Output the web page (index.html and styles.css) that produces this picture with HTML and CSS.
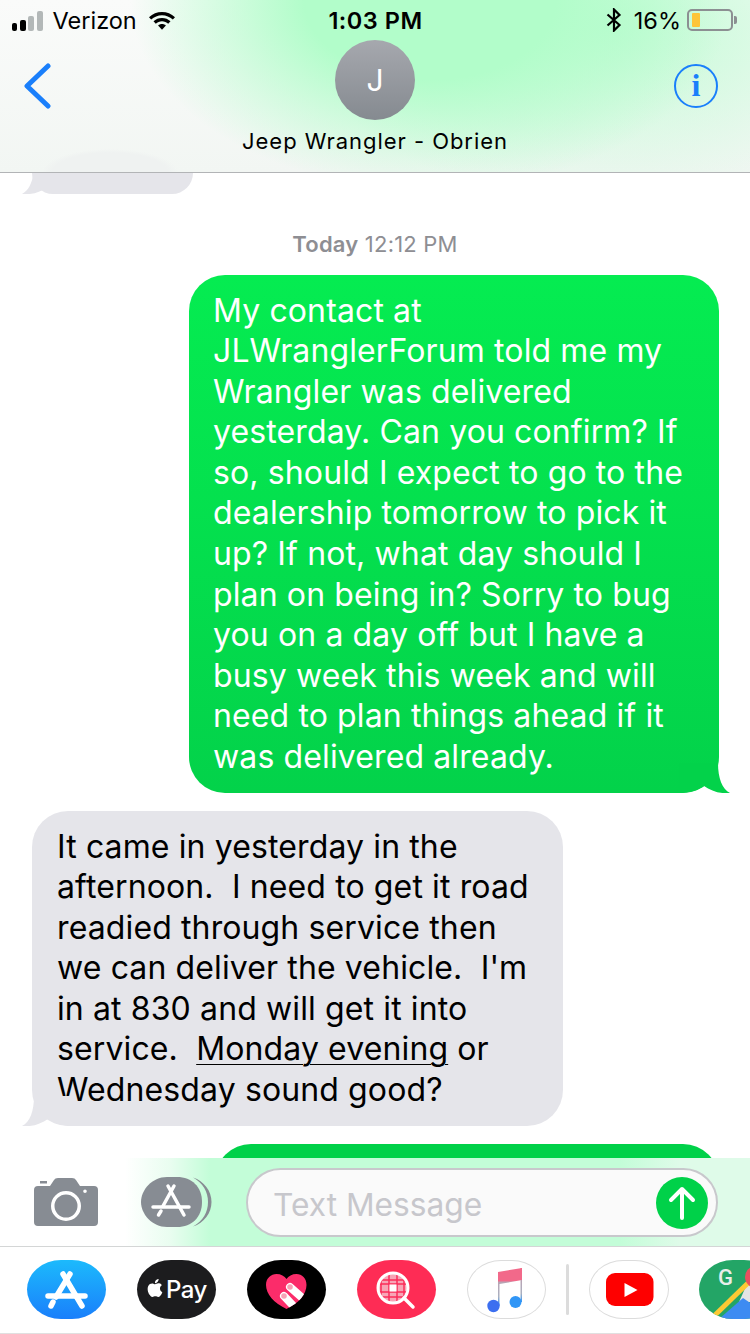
FILE: index.html
```html
<!DOCTYPE html>
<html lang="en">
<head>
<meta charset="utf-8">
<title>Messages</title>
<link rel="stylesheet" href="styles.css">
</head>
<body>
<div class="phone">
  <header class="header">
    <div class="status">
      <div class="status-left">
        <div class="signal"><i class="bar b1"></i><i class="bar b2"></i><i class="bar b3 off"></i><i class="bar b4 off"></i></div>
        <span class="carrier">Verizon</span>
        <svg class="wifi" width="28" height="20" viewBox="0 0 28 20"><path d="M14 2C9 2 4.700 3.900 1 7.200L3.200 9.600C6.200 6.900 9.900 5.300 14 5.300S21.800 6.900 24.800 9.600L27 7.200C23.300 3.900 19 2 14 2Z"/><path d="M14 8C10.700 8 7.800 9.200 5.500 11.300L7.800 13.700C9.500 12.200 11.600 11.300 14 11.300S18.500 12.200 20.200 13.700L22.500 11.300C20.200 9.200 17.300 8 14 8Z"/><path d="M14 14C12.500 14 11.200 14.500 10.100 15.500L14 19.800L17.900 15.500C16.800 14.500 15.500 14 14 14Z"/></svg>
      </div>
      <div class="clock">1:03 PM</div>
      <div class="status-right">
        <svg class="bt" width="16" height="24" viewBox="0 0 16 24"><path d="M1.500 6.500L13.500 17L8 22.500V1.500L13.500 7L1.500 17.500" fill="none" stroke="#000" stroke-width="2.200"/></svg>
        <span class="pct">16%</span>
        <div class="battery"><i class="level"></i></div>
        <i class="nub"></i>
      </div>
    </div>
    <div class="nav">
      <svg class="back" width="30" height="46" viewBox="0 0 30 46"><path d="M24 3L3 23L24 43" fill="none" stroke="#1a7ffb" stroke-width="5" stroke-linecap="round" stroke-linejoin="round"/></svg>
      <div class="contact">
        <div class="avatar">J</div>
        <div class="name">Jeep Wrangler - Obrien</div>
      </div>
      <div class="info">i</div>
    </div>
  </header>

  <main class="thread">
    <div class="bubble in stub">
      <svg class="tail tail-in" width="51" height="30" viewBox="0 0 51 30"><path d="M12 0C12 15 8 26 0 30C10 31 19 28 26 23C32 27 40 30 51 30V0Z"/></svg>
    </div>
    <div class="stamp"><b>Today</b> 12:12 PM</div>
    <div class="bubble out first">My contact at
JLWranglerForum told me my
Wrangler was delivered
yesterday. Can you confirm? If
so, should I expect to go to the
dealership tomorrow to pick it
up? If not, what day should I
plan on being in? Sorry to bug
you on a day off but I have a
busy week this week and will
need to plan things ahead if it
was delivered already.<svg class="tail tail-out" width="51" height="30" viewBox="0 0 51 30"><path d="M39 0C39 15 43 26 51 30C41 31 32 28 25 23C19 27 11 30 0 30V0Z"/></svg></div>
    <div class="bubble in reply">It came in yesterday in the
afternoon.  I need to get it road
readied through service then
we can deliver the vehicle.  I'm
in at 830 and will get it into
service.  <u>Monday evening</u> or
Wednesday sound good?<svg class="tail tail-in" width="51" height="30" viewBox="0 0 51 30"><path d="M12 0C12 15 8 26 0 30C10 31 19 28 26 23C32 27 40 30 51 30V0Z"/></svg></div>
    <div class="bubble out next"></div>
  </main>

  <section class="composer">
    <svg class="camera" width="64" height="48" viewBox="0 0 64 48"><path fill-rule="evenodd" d="M6 3H13V5.500H6ZM4 8H16L20 2Q21 0 24 0H38Q41 0 42 2L46 8H60Q64 8 64 12V44Q64 48 60 48H4Q0 48 0 44V12Q0 8 4 8ZM32 13A15 15 0 1 0 32 43A15 15 0 1 0 32 13ZM32 16.500A11.500 11.500 0 1 1 32 39.500A11.500 11.500 0 1 1 32 16.500ZM51 11.500A1.800 1.800 0 1 0 51 15.100A1.800 1.800 0 1 0 51 11.500Z"/></svg>
    <div class="apps-toggle">
      <svg width="71" height="50" viewBox="0 0 71 50"><path d="M26 0H36C51 0 61 10 61 25S51 50 36 50H26C11 50 0 37 0 25S11 0 26 0Z" fill="#878c93"/><path d="M52 0.500C63 4 70.500 14 70.500 25S63 46 52 49.500C62 44 67 35 67 25S62 6 52 0.500Z" fill="#878c93"/><g fill="none" stroke="#fff" stroke-width="3.500" stroke-linecap="round"><path d="M33 9L22 29"/><path d="M20 34L17.500 38"/><path d="M27 9L43 38"/><path d="M12 30H48"/></g></svg>
    </div>
    <div class="field">
      <span class="placeholder">Text Message</span>
      <div class="send"><svg width="30" height="36" viewBox="0 0 30 36"><path d="M15 33V4M4 15L15 4L26 15" fill="none" stroke="#fff" stroke-width="4" stroke-linecap="round" stroke-linejoin="round"/></svg></div>
    </div>
  </section>

  <nav class="drawer">
    <div class="pill store"><svg width="79" height="59" viewBox="0 0 79 59"><g fill="none" stroke="#fff" stroke-width="5.500" stroke-linecap="round"><path d="M43 14L29 37"/><path d="M26 42L24 46"/><path d="M36 14L55 46"/><path d="M21 36H58"/></g></svg></div>
    <div class="pill pay"><svg class="apple" width="18" height="22" viewBox="0 0 24 24"><path fill="#fff" d="M12.152 6.896c-.948 0-2.415-1.078-3.960-1.040-2.040.027-3.910 1.183-4.961 3.014-2.117 3.675-.546 9.103 1.519 12.090 1.013 1.454 2.208 3.090 3.792 3.039 1.520-.065 2.090-.987 3.935-.987 1.831 0 2.350.987 3.960.948 1.637-.026 2.676-1.480 3.676-2.948 1.156-1.688 1.636-3.325 1.662-3.415-.039-.013-3.182-1.221-3.220-4.857-.026-3.040 2.480-4.494 2.597-4.559-1.429-2.090-3.623-2.324-4.390-2.376-2-.156-3.675 1.090-4.610 1.090zM15.530 3.830c.843-1.012 1.400-2.427 1.245-3.830-1.207.052-2.662.805-3.532 1.818-.780.896-1.454 2.338-1.273 3.714 1.338.104 2.715-.688 3.559-1.701"/></svg><span class="pay-text">Pay</span></div>
    <div class="pill heart"><svg width="79" height="59" viewBox="0 0 79 59"><defs><clipPath id="heart-shape"><path d="M39.500 49C27 43 19 34 19 25C19 18 24 14 29.500 14C34 14 37.500 16 39.500 19C41.500 16 45 14 49.500 14C55 14 59.500 18 59.500 25C59.500 34 52 43 39.500 49Z"/></clipPath></defs><g clip-path="url(#heart-shape)"><rect width="79" height="59" fill="#fb2c6a"/><g stroke="#fff" stroke-width="8" stroke-linecap="round"><path d="M43 27L60 42"/><path d="M37 36L52 52"/></g></g><circle cx="43" cy="27" r="2.800" fill="#f7a2b6"/><circle cx="37" cy="36" r="2.800" fill="#f7a2b6"/></svg></div>
    <div class="pill search"><svg width="79" height="59" viewBox="0 0 79 59"><defs><clipPath id="lens"><circle cx="36" cy="28" r="14.500"/></clipPath></defs><g clip-path="url(#lens)"><rect x="20" y="12" width="32" height="32" fill="#f7a5b6"/><g stroke="#fb2c5a" stroke-width="1.500"><path d="M20 20H52M20 24H52M20 32H52M20 37H52M24 12V44M32 12V44M40 12V44M47 12V44"/></g><rect x="32.500" y="24.500" width="7" height="7" fill="#fff"/></g><circle cx="36" cy="28" r="15" fill="none" stroke="#fff" stroke-width="3"/><path d="M47 38L56 47" stroke="#fff" stroke-width="3.500" stroke-linecap="round"/></svg></div>
    <div class="pill plain"><svg width="79" height="59" viewBox="0 0 79 59"><defs><linearGradient id="note-stem" x1="0" y1="0" x2="0" y2="1"><stop offset="0" stop-color="#f2698a"/><stop offset=".35" stop-color="#f2698a"/><stop offset=".36" stop-color="#b9a4b4"/><stop offset=".75" stop-color="#a9b0c0"/><stop offset="1" stop-color="#3196f6"/></linearGradient></defs><path d="M31 12L55 8V20L32.500 24V46H31Z" fill="url(#note-stem)"/><path d="M53.500 8H55V42H53.500Z" fill="url(#note-stem)"/><circle cx="26.500" cy="46" r="6.200" fill="#3c6ff0"/><circle cx="48.500" cy="42" r="6" fill="#3196f6"/></svg></div>
    <i class="divider"></i>
    <div class="pill plain tube"><svg width="79" height="59" viewBox="0 0 79 59"><rect x="16" y="13" width="47.500" height="33" rx="9" fill="#fe0000"/><path d="M34.500 23L47.500 30L34.500 37Z" fill="#fff"/></svg></div>
    <div class="pill maps"><svg width="79" height="59" viewBox="0 0 79 59"><rect width="79" height="59" fill="#23a566"/><path d="M48 24H79V42H40Z" fill="#e4e4e4"/><path d="M20 59L44 38L62 50V59Z" fill="#3d8bf2"/><path d="M15 56L49 23" stroke="#fcc934" stroke-width="5"/><circle cx="57" cy="17" r="11" fill="#e8505f"/><text class="maps-g" x="19" y="25">G</text></svg></div>
  </nav>
</div>
</body>
</html>
```
FILE: styles.css
```css
* { box-sizing: border-box; }
html, body { margin: 0; padding: 0; background: #fff; }
.phone {
  width: 750px;
  height: 1334px;
  display: flex;
  flex-direction: column;
  overflow: hidden;
  font-family: Inter, "Liberation Sans", sans-serif;
  color: #000;
  background: #fff;
}

/* header */
.header {
  flex: 0 0 173px;
  border-bottom: 1px solid #b2b4b6;
  background:
    radial-gradient(ellipse 300px 190px at 430px 0, #b2fdca 0, #b2fdca 42%, rgba(178,253,202,0) 100%),
    radial-gradient(ellipse 300px 175px at 610px 30px, #c0fbd3 0, rgba(192,251,211,0) 100%),
    radial-gradient(ellipse 68px 24px at 110px 173px, #eff2f1 0, #eff2f1 85%, rgba(239,242,241,0) 100%),
    linear-gradient(180deg, #fafbfa 0, #f2f6f3 100%);
}
.status {
  height: 40px;
  display: grid;
  grid-template-columns: 1fr auto 1fr;
  align-items: center;
  padding: 0 13px 0 12px;
  font-size: 23.500px;
}
.status-left { display: flex; align-items: center; }
.signal { display: flex; align-items: flex-end; gap: 2.500px; height: 21px; }
.bar { display: block; width: 6px; border-radius: 2px; background: #000; }
.bar.off { background: #b3b8b8; }
.b1 { height: 8px; width: 5px; }
.b2 { height: 11px; }
.b3 { height: 15px; }
.b4 { height: 20px; }
.carrier { margin-left: 10px; }
.wifi { margin-left: 11px; }
.clock { font-weight: 600; letter-spacing: .5px; margin-left: 2px; }
.status-right { display: flex; align-items: center; justify-content: flex-end; }
.pct { margin-left: 12px; }
.battery {
  width: 46px;
  height: 22px;
  margin-left: 6px;
  padding: 2px;
  border: 2px solid #8c8f92;
  border-radius: 5px;
}
.level { display: block; width: 8px; height: 100%; margin-left: 1px; background: #fec53a; border-radius: 1px; }
.nub { display: block; width: 3px; height: 8px; margin-left: 1px; background: #8c8f92; border-radius: 0 2px 2px 0; }

.nav {
  display: grid;
  grid-template-columns: 1fr auto 1fr;
  align-items: start;
  padding: 0 32px;
}
.back { margin: 23px 0 0 -8px; }
.contact { display: flex; flex-direction: column; align-items: center; }
.avatar {
  width: 80px;
  height: 80px;
  border-radius: 50%;
  background: linear-gradient(180deg, #a6a8ae, #858a90);
  color: #fff;
  font-size: 30px;
  display: flex;
  align-items: center;
  justify-content: center;
}
.name { margin-top: 7px; font-size: 22px; line-height: 28px; letter-spacing: .95px; white-space: nowrap; }
.info {
  justify-self: end;
  margin-top: 24px;
  width: 44px;
  height: 44px;
  border: 2px solid #1a7ffb;
  border-radius: 50%;
  color: #1a7ffb;
  font: 700 32px/38px "Liberation Serif", serif;
  text-align: center;
}

/* thread */
.thread {
  flex: 1 1 0;
  min-height: 0;
  overflow: hidden;
  display: flex;
  flex-direction: column;
  align-items: flex-start;
}
.bubble {
  position: relative;
  flex-shrink: 0;
  padding: 15.700px 25px;
  border-radius: 36px;
  font-size: 32px;
  line-height: 40.550px;
  letter-spacing: .12px;
  white-space: pre;
}
.in { margin-left: 32px; background: #e5e5ea; }
.out { align-self: flex-end; margin-right: 31px; color: #fff; padding-left: 24px; }
.stub { width: 161px; height: 21px; padding: 0; border-radius: 0 0 30px 30px; }
.stamp {
  align-self: center;
  margin-top: 37px;
  font-size: 22px;
  line-height: 26px;
  letter-spacing: .2px;
  color: #8e8e93;
}
.stamp b { font-weight: 600; }
.first {
  margin-top: 18px;
  width: 530px;
  background: linear-gradient(180deg, #05ec51, #03d24a);
}
.reply { margin-top: 18px; width: 531px; padding-left: 25px; }
.next { margin-top: 18px; width: 504px; height: 90px; background: #00d149; }
.tail { position: absolute; bottom: 0; display: block; }
.tail-out { right: -11px; fill: #03d24a; }
.tail-in { left: -10px; fill: #e5e5ea; }
u { text-underline-offset: 4px; text-decoration-thickness: 1px; }

/* composer */
.composer {
  flex: 0 0 89px;
  display: flex;
  align-items: flex-start;
  padding: 10px 32px 0 34px;
  border-bottom: 1px solid #d4d6d6;
  background:
    linear-gradient(90deg, #fff 0, #fff 125px, #e9fdf0 170px, #c3fdd8 210px, #c3fdd8 620px, #dffbe9 680px);
}
.camera { margin-top: 10px; fill: #878c93; flex-shrink: 0; }
.apps-toggle { margin: 9px 0 0 43px; width: 69px; flex-shrink: 0; }
.apps-toggle svg { display: block; overflow: visible; }
.field {
  flex: 1;
  margin-left: 36px;
  height: 69px;
  display: flex;
  align-items: center;
  justify-content: space-between;
  padding: 0 8px 0 25px;
  background: #fafafa;
  border: 2px solid #c8c8cc;
  border-radius: 35px;
}
.placeholder { font-size: 31.700px; color: #c7c7cc; padding-top: 3px; }
.send {
  width: 52px;
  height: 52px;
  border-radius: 50%;
  background: #00d149;
  display: flex;
  align-items: center;
  justify-content: center;
}

/* app drawer */
.drawer {
  flex: 0 0 87px;
  display: flex;
  align-items: flex-start;
  gap: 31px;
  padding: 13px 0 0 27px;
  overflow: hidden;
  border-bottom: 1px solid #e0e0e0;
}
.pill {
  flex: 0 0 79px;
  height: 59px;
  border-radius: 34px / 29.500px;
  overflow: hidden;
  display: flex;
  align-items: center;
  justify-content: center;
}
.pill svg { display: block; }
.store { background: linear-gradient(180deg, #1cbafc, #1a7ffb); }
.pay { background: #1c1c1e; color: #fff; gap: 2px; }
.apple { margin-top: -3px; }
.pay-text { font-size: 24px; font-weight: 500; letter-spacing: -.5px; }
.heart { background: #000; }
.search { background: #fe2c55; }
.plain { background: #fff; box-shadow: inset 0 0 0 1px #dcdcdc; }
.divider { flex: 0 0 3px; height: 51px; margin: 4px -11px 0 -11px; background: #dcdcdc; border-radius: 2px; }
.tube { flex-basis: 80px; margin-right: -1px; }
.maps-g { font: 500 22px Roboto, sans-serif; fill: #e8eee9; }
```
